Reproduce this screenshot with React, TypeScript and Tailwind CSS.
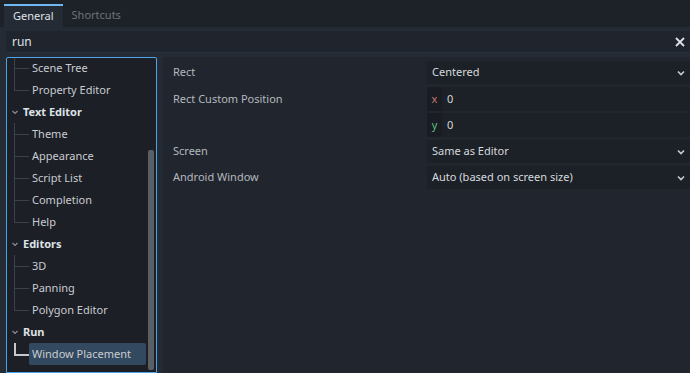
import React from 'react';

const font = { fontFamily: '"Noto Sans", "Open Sans", sans-serif' };

type TreeRow = { label: string; kind: 'section' | 'leaf'; selected?: boolean; last?: boolean };

const rows: TreeRow[] = [
  { label: 'Scene Tree', kind: 'leaf' },
  { label: 'Property Editor', kind: 'leaf', last: true },
  { label: 'Text Editor', kind: 'section' },
  { label: 'Theme', kind: 'leaf' },
  { label: 'Appearance', kind: 'leaf' },
  { label: 'Script List', kind: 'leaf' },
  { label: 'Completion', kind: 'leaf' },
  { label: 'Help', kind: 'leaf', last: true },
  { label: 'Editors', kind: 'section' },
  { label: '3D', kind: 'leaf' },
  { label: 'Panning', kind: 'leaf' },
  { label: 'Polygon Editor', kind: 'leaf', last: true },
  { label: 'Run', kind: 'section' },
  { label: 'Window Placement', kind: 'leaf', selected: true },
];

const Chevron = () => (
  <svg width="10" height="10" viewBox="0 0 10 10" className="shrink-0">
    <path d="M2 3.5 L5 6.5 L8 3.5" stroke="#c9ccd1" strokeWidth="1.6" fill="none" />
  </svg>
);

const SmallArrow = () => (
  <svg width="8" height="8" viewBox="0 0 8 8" className="shrink-0">
    <path d="M1.5 3 L4 5.5 L6.5 3" stroke="#8a8f97" strokeWidth="1.2" fill="none" />
  </svg>
);

function TreeItem({ row }: { row: TreeRow }) {
  if (row.kind === 'section') {
    return (
      <div className="h-[22px] flex items-center pl-[4px] gap-[4px]">
        <SmallArrow />
        <span className="text-[11px] font-bold text-[#dfe2e6]">{row.label}</span>
      </div>
    );
  }
  const lineColor = row.selected ? '#c4c7cc' : '#3c424c';
  return (
    <div className="h-[22px] flex items-stretch relative">
      <div className="w-[22px] relative shrink-0">
        <div
          className="absolute left-[7px] top-0 w-px"
          style={{ background: lineColor, height: row.last || row.selected ? 11 : 22, width: row.selected ? 2 : 1 }}
        />
        <div
          className="absolute left-[7px] top-[11px] h-px w-[15px]"
          style={{ background: lineColor, height: row.selected ? 2 : 1 }}
        />
      </div>
      <div
        className={
          'flex items-center pl-[3px] pr-2 flex-1 mr-[1px] ' +
          (row.selected ? 'bg-[#33495f] rounded-[2px]' : '')
        }
      >
        <span className="text-[11px] text-[#c9ccd1] whitespace-nowrap">{row.label}</span>
      </div>
    </div>
  );
}

function Dropdown({ value }: { value: string }) {
  return (
    <div className="h-[23px] bg-[#1c2027] rounded-[2px] flex items-center justify-between pl-[5px] pr-[4px]">
      <span className="text-[11px] text-[#d6d9dd]">{value}</span>
      <Chevron />
    </div>
  );
}

function AxisField({ axis, color }: { axis: string; color: string }) {
  return (
    <div className="h-[24px] bg-[#1c2027] rounded-[2px] flex items-center">
      <div className="w-[15px] h-[24px] bg-[#191c22] flex items-center justify-center rounded-[2px]">
        <span className="text-[11px]" style={{ color }}>{axis}</span>
      </div>
      <span className="text-[11px] text-[#d6d9dd] pl-[5px]">0</span>
    </div>
  );
}

export default function App() {
  return (
    <div className="w-[690px] h-[373px] bg-[#1d2229] overflow-hidden flex flex-col" style={font}>
      {/* Tabs */}
      <div className="h-[27px] flex items-end pl-[4px] shrink-0">
        <div className="h-[23px] px-[9px] bg-[#252b34] border-t-2 border-[#70b6f0] flex items-center">
          <span className="text-[11px] text-[#dfe2e6]">General</span>
        </div>
        <div className="h-[23px] px-[9px] flex items-center">
          <span className="text-[11px] text-[#6c727c]">Shortcuts</span>
        </div>
      </div>

      {/* Body */}
      <div className="flex-1 bg-[#252b34] pt-[4px] pl-[6px] flex flex-col min-h-0">
        <div className="h-[22px] bg-[#20252d] border-b border-[#2a303a] flex items-center justify-between pl-[6px] pr-[4px] shrink-0">
          <span className="text-[12px] text-[#dfe2e6]">run</span>
          <svg width="12" height="12" viewBox="0 0 12 12">
            <path d="M2 2 L10 10 M10 2 L2 10" stroke="#dfe2e6" strokeWidth="1.8" />
          </svg>
        </div>

        <div className="flex-1 flex gap-[6px] pt-[4px] min-h-0">
          {/* Tree */}
          <div className="w-[151px] shrink-0 bg-[#1c1f26] border border-[#4ba3ea] rounded-t-[2px] flex min-h-0 overflow-hidden">
            <div className="flex-1 flex flex-col -mt-[1px]">
              {rows.map((r) => (
                <TreeItem key={r.label} row={r} />
              ))}
            </div>
            <div className="w-[9px] shrink-0 flex flex-col py-[2px] pr-[2px]">
              <div className="h-[90px]" />
              <div className="flex-1 bg-[#5a5f66] rounded-[2px] w-[6px] ml-[1px]" />
            </div>
          </div>

          {/* Inspector */}
          <div className="flex-1 bg-[#21262e] pt-[4px] flex flex-col">
            <div className="flex items-center h-[23px]">
              <span className="w-[264px] pl-[10px] text-[11px] text-[#b4b8bf]">Rect</span>
              <div className="flex-1"><Dropdown value="Centered" /></div>
            </div>
            <div className="flex mt-[3px]">
              <span className="w-[264px] pl-[10px] pt-[4px] text-[11px] text-[#b4b8bf]">Rect Custom Position</span>
              <div className="flex-1 flex flex-col gap-[2px]">
                <AxisField axis="x" color="#c07a6e" />
                <AxisField axis="y" color="#5fbf80" />
              </div>
            </div>
            <div className="flex items-center h-[23px] mt-[3px]">
              <span className="w-[264px] pl-[10px] text-[11px] text-[#b4b8bf]">Screen</span>
              <div className="flex-1"><Dropdown value="Same as Editor" /></div>
            </div>
            <div className="flex items-center h-[23px] mt-[3px]">
              <span className="w-[264px] pl-[10px] text-[11px] text-[#b4b8bf]">Android Window</span>
              <div className="flex-1"><Dropdown value="Auto (based on screen size)" /></div>
            </div>
          </div>
        </div>
      </div>
    </div>
  );
}
